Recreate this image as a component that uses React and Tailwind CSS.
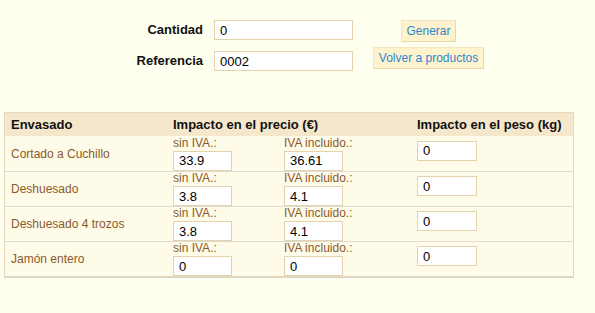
import React, { useState } from 'react';

const rows = [
  { name: 'Cortado a Cuchillo', sin: '33.9', con: '36.61', peso: '0' },
  { name: 'Deshuesado', sin: '3.8', con: '4.1', peso: '0' },
  { name: 'Deshuesado 4 trozos', sin: '3.8', con: '4.1', peso: '0' },
  { name: 'Jamón entero', sin: '0', con: '0', peso: '0' },
];

const inputCls =
  'h-[20px] border border-[#e2d2ae] bg-white px-[5px] text-[13px] text-black outline-none';

export default function App() {
  const [cantidad, setCantidad] = useState('0');
  const [referencia, setReferencia] = useState('0002');

  return (
    <div className="h-[313px] w-[595px] bg-[#fffff0] font-['Liberation_Sans',Arial,sans-serif] text-[12px]">
      <div className="flex pt-[20px]">
        <div className="flex w-[203px] shrink-0 flex-col gap-[11px] text-right text-[13px] font-bold text-[#111]">
          <div className="h-[20px] leading-[20px]">Cantidad</div>
          <div className="h-[20px] leading-[20px]">Referencia</div>
        </div>
        <div className="ml-[11px] flex w-[139px] shrink-0 flex-col gap-[11px]">
          <input className={`${inputCls} w-[139px]`} value={cantidad} onChange={e => setCantidad(e.target.value)} />
          <input className={`${inputCls} w-[139px]`} value={referencia} onChange={e => setReferencia(e.target.value)} />
        </div>
        <div className="ml-[20px] flex w-[111px] shrink-0 flex-col items-center gap-[5px]">
          <button className="h-[22px] border border-[#f1e6c0] border-b-[#e6d8a8] border-r-[#e6d8a8] bg-[#fff3cd] px-[4px] text-[12px] text-[#2a88cf]">
            Generar
          </button>
          <button className="h-[22px] w-[111px] border border-[#f1e6c0] border-b-[#e6d8a8] border-r-[#e6d8a8] bg-[#fff3cd] px-[3px] text-[12px] text-[#2a88cf]">
            Volver a productos
          </button>
        </div>
      </div>

      <div className="ml-[4px] mt-[41px] w-[570px] border border-[#e6d9bb] bg-[#fffbe9] shadow-[0_1px_0_#d8d4c8]">
        <div className="flex h-[23px] items-center bg-[#f5e7cb] text-[13px] font-bold text-[#111]">
          <div className="w-[162px] shrink-0 pl-[6px]">Envasado</div>
          <div className="w-[244px] shrink-0 pl-[6px]">Impacto en el precio (€)</div>
          <div className="shrink-0 pl-[6px]">Impacto en el peso (kg)</div>
        </div>
        {rows.map((r, i) => (
          <div
            key={r.name}
            className={`flex h-[35px] items-center ${i > 0 ? 'border-t border-[#dedbd0]' : ''}`}
          >
            <div className="w-[162px] shrink-0 pl-[6px] text-[#8a5a2b]">{r.name}</div>
            <div className="flex w-[244px] shrink-0 pl-[6px]">
              <div className="w-[111px]">
                <div className="leading-[13px] text-[#8a5a2b]">sin IVA.:</div>
                <input className={`${inputCls} mt-[1px] h-[19px] w-[59px]`} defaultValue={r.sin} />
              </div>
              <div>
                <div className="leading-[13px] text-[#8a5a2b]">IVA incluido.:</div>
                <input className={`${inputCls} mt-[1px] h-[19px] w-[59px]`} defaultValue={r.con} />
              </div>
            </div>
            <div className="shrink-0 pl-[6px]">
              <input className={`${inputCls} mb-[6px] w-[60px]`} defaultValue={r.peso} />
            </div>
          </div>
        ))}
      </div>
    </div>
  );
}
